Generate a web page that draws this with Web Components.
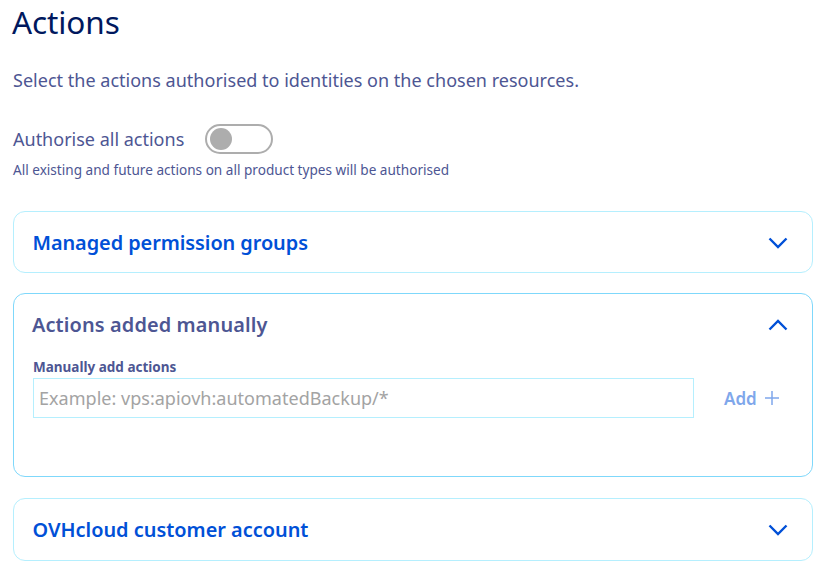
<!DOCTYPE html>
<html lang="en"><head><meta charset="utf-8"><title>Actions</title>
<style>
html,body{margin:0;padding:0;background:#fff;overflow:hidden}
body{font-family:"Noto Sans","Open Sans",sans-serif;color:#4d5693;-webkit-font-smoothing:antialiased}
</style></head><body>
<actions-page>
  <h-title slot="title">Actions</h-title>
  <switch-row label="Authorise all actions" hint="All existing and future actions on all product types will be authorised"></switch-row>
  <acc-card title="Managed permission groups" style="--ls:-.06px"></acc-card>
  <acc-card title="Actions added manually" open style="--ls:.13px">
    <add-field label="Manually add actions" placeholder="Example: vps:apiovh:automatedBackup/*"></add-field>
  </acc-card>
  <acc-card title="OVHcloud customer account" tall></acc-card>
</actions-page>
<script>
const F='"Noto Sans","Open Sans",sans-serif';
function def(name,html){
  customElements.define(name,class extends HTMLElement{
    connectedCallback(){
      if(this.shadowRoot)return;
      const s=this.attachShadow({mode:'open'});
      s.innerHTML=typeof html==='function'?html(this):html;
    }
  });
}
def('actions-page',`<style>
:host{display:flex;flex-direction:column;padding:0 11px 0 13px;width:800px;font-family:${F}}
.sub{margin:0;box-sizing:border-box;font-size:18px;line-height:24px;color:#4d5693;letter-spacing:.015px;padding-top:21px;height:77px}
</style>
<slot name="title"></slot>
<p class="sub">Select the actions authorised to identities on the chosen resources.</p>
<slot></slot>`);
def('h-title',`<style>
:host{display:block;height:47px;margin-left:-1px;font-size:31.5px;line-height:44px;color:#00185e;font-weight:400;letter-spacing:-.1px;font-family:${F}}
</style><slot></slot>`);
def('switch-row',el=>`<style>
:host{display:block;height:87px;font-family:${F}}
.row{display:flex;align-items:center;gap:21px;height:30px}
.lbl{font-size:18px;line-height:30px;color:#4d5693}
.tog{box-sizing:border-box;width:68px;height:30px;border:2px solid #adadad;border-radius:15px;padding:2px 3px;background:#fff;display:flex}
.knob{width:22px;height:22px;border-radius:50%;background:#adadad}
.hint{margin:6px 0 0;font-size:13.6px;line-height:20px;color:#4d5693}
</style>
<div class="row"><span class="lbl">${el.getAttribute('label')}</span><span class="tog"><span class="knob"></span></span></div>
<p class="hint">${el.getAttribute('hint')}</p>`);
def('acc-card',el=>{
 const open=el.hasAttribute('open');
 return `<style>
:host{display:block;box-sizing:border-box;margin-bottom:20px;border:1px solid #b5effe;border-radius:12px;background:#fff;font-family:${F}}
:host([open]){border-color:#7fd8fb;margin-bottom:21px}
.head{box-sizing:border-box;display:flex;align-items:center;justify-content:space-between;height:60px;padding:1px 24px 0 18.5px}
:host([tall]) .head{height:61px}
:host([open]) .head{height:61px;padding:0 24px 0 18px}
h3{margin:0;font-size:19.9px;line-height:28px;font-weight:600;letter-spacing:var(--ls,0);color:${open?'#4d5693':'#0050d7'}}
svg{width:20px;height:12px;display:block;fill:none;stroke:#0050d7;stroke-width:2.4}
.body{padding:4px 19px 58px 19px}
</style>
<div class="head"><h3>${el.getAttribute('title')}</h3>
<svg viewBox="0 0 20 12"><path d="${open?'M1.5 10.5 10 2l8.5 8.5':'M1.5 1.5 10 10l8.5-8.5'}"/></svg></div>
${open?'<div class="body"><slot></slot></div>':''}`;
});
def('add-field',el=>`<style>
:host{display:block;font-family:${F}}
label{display:block;font-size:13.5px;line-height:17px;font-weight:700;color:#4d5693;height:17px;margin-bottom:2px}
.row{display:flex;align-items:center}
.box{box-sizing:border-box;flex:none;width:661px;height:40px;border:1px solid #b5effe;padding:0 5px;font-size:18px;line-height:38px;color:#a3a3a3;letter-spacing:.02px;white-space:nowrap}
.add{margin-left:30px;display:flex;align-items:center;gap:7px;font-size:17px;font-weight:600;color:#7fa7eb}
svg{width:16px;height:16px;stroke:#7fa7eb;stroke-width:1.5;fill:none;display:block}
</style>
<label>${el.getAttribute('label')}</label>
<div class="row"><div class="box">${el.getAttribute('placeholder')}</div>
<span class="add">Add<svg viewBox="0 0 16 16"><path d="M8 1v14M1 8h14"/></svg></span></div>`);
</script>
</body></html>
